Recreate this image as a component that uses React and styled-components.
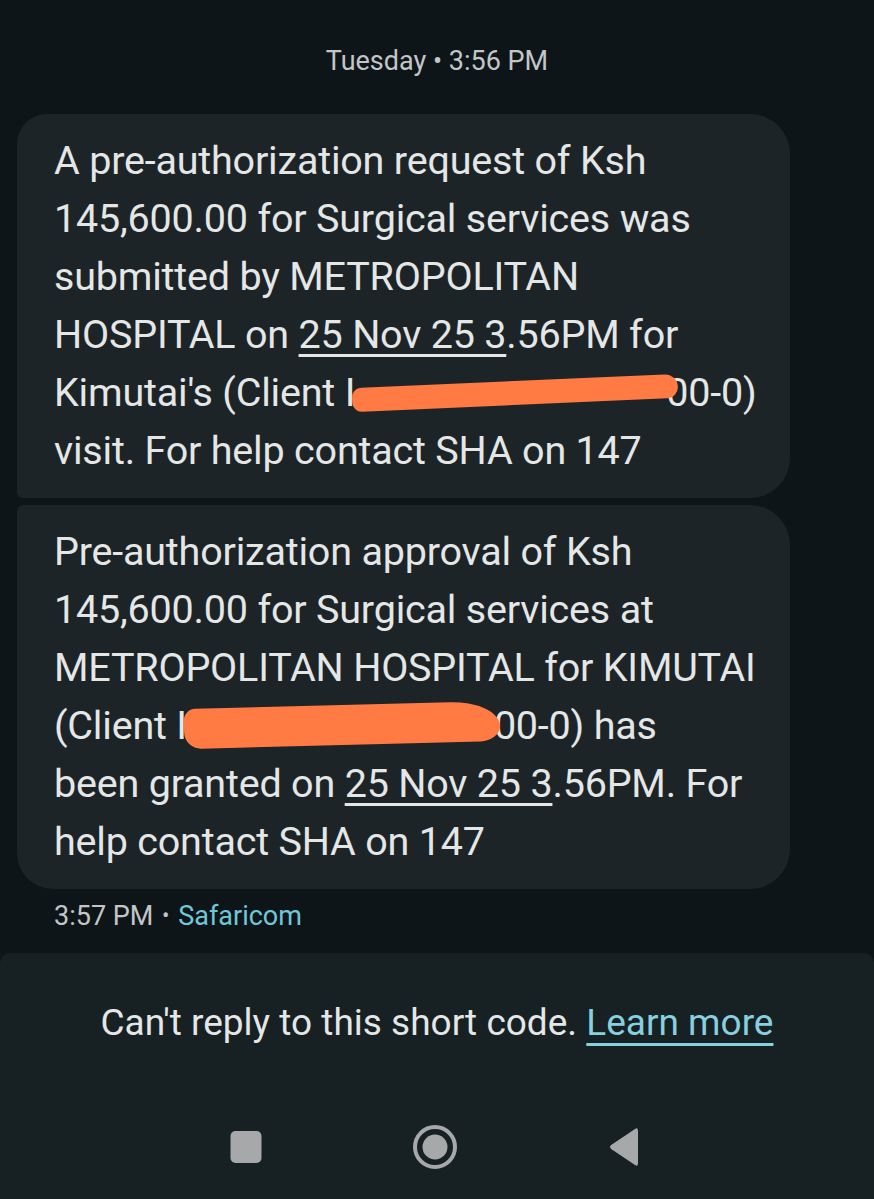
import React from 'react';
import styled, { createGlobalStyle } from 'styled-components';

const GlobalStyle = createGlobalStyle`
  html, body {
    margin: 0;
    padding: 0;
    background: #0e1518;
  }
  body {
    font-family: Roboto, "Liberation Sans", sans-serif;
    -webkit-font-smoothing: antialiased;
  }
`;

const Screen = styled.div`
  width: 874px;
  height: 1199px;
  display: flex;
  flex-direction: column;
  background: #0e1518;
  overflow: hidden;
`;

const Thread = styled.div`
  display: flex;
  flex-direction: column;
  padding: 0 84px 0 17px;
  flex: 1;
`;

const DateHeader = styled.div`
  text-align: center;
  color: #c3c6c7;
  font-size: 27px;
  line-height: 32px;
  padding: 45px 0 37px 67px;
`;

const BubbleGroup = styled.div`
  display: flex;
  flex-direction: column;
  gap: 7px;
`;

const Bubble = styled.div`
  background: #1c2427;
  color: #e5e6e6;
  padding: 18px 37px;
  border-radius: ${({ $corners }) =>
    $corners === 'first' ? '30px 40px 40px 6px' : '6px 40px 40px 36px'};
  font-size: 39.5px;
  line-height: 58px;
  letter-spacing: -0.2px;
`;

const Line = styled.div`
  white-space: nowrap;
`;

const DateLink = styled.span`
  text-decoration: underline;
  text-decoration-thickness: 3px;
  text-underline-offset: 6px;
`;

const Redaction = styled.span`
  display: inline-block;
  width: ${({ $width }) => $width}px;
  height: ${({ $thick }) => $thick}px;
  margin: 0 ${({ $overlap }) => -$overlap}px 0 -3px;
  vertical-align: ${({ $drop }) => -$drop}px;
  background: #ff7b43;
  border-radius: ${({ $shape }) => $shape};
  transform: rotate(${({ $tilt }) => $tilt}deg);
  position: relative;
`;

const Meta = styled.div`
  color: #c3c6c7;
  font-size: 27px;
  line-height: 32px;
  padding: 11px 0 0 37px;
  height: 53px;
`;

const Dot = styled.span`
  font-size: 22px;
  vertical-align: 2px;
  margin: 0 2px;
`;

const Sender = styled.span`
  color: #6fc8d8;
`;

const Footer = styled.div`
  background: #172023;
  border-radius: 10px 10px 0 0;
  height: 247px;
  display: flex;
  flex-direction: column;
  align-items: center;
`;

const Notice = styled.div`
  color: #e5e6e6;
  font-size: 37px;
  line-height: 44px;
  padding-top: 48px;
  text-align: center;
`;

const LearnMore = styled.span`
  color: #86d0df;
  text-decoration: underline;
  text-decoration-thickness: 3px;
  text-underline-offset: 8px;
`;

const NavBar = styled.div`
  display: flex;
  align-items: center;
  justify-content: center;
  gap: 139px;
  margin: 77px 0 0 -4px;
`;

const NavButton = styled.div`
  width: 50px;
  height: 50px;
  display: flex;
  align-items: center;
  justify-content: center;
`;

const messages = [
  {
    id: 1,
    corners: 'first',
    lines: [
      <>A pre-authorization request of Ksh</>,
      <>145,600.00 for Surgical services was</>,
      <>submitted by METROPOLITAN</>,
      <>HOSPITAL on <DateLink>25 Nov 25 3</DateLink>.56PM for</>,
      <>
        Kimutai's (Client I
        <Redaction $width={326} $thick={24} $drop={-1} $tilt={-2.5} $overlap={12} $shape="12px 16px 14px 12px" />
        00-0)
      </>,
      <>visit. For help contact SHA on 147</>,
    ],
  },
  {
    id: 2,
    corners: 'last',
    lines: [
      <>Pre-authorization approval of Ksh</>,
      <>145,600.00 for Surgical services at</>,
      <>METROPOLITAN HOSPITAL for KIMUTAI</>,
      <>
        (Client I
        <Redaction $width={316} $thick={40} $drop={6} $tilt={-1.5} $overlap={6} $shape="14px 60px 24px 20px / 14px 30px 18px 20px" />
        00-0) has
      </>,
      <>been granted on <DateLink>25 Nov 25 3</DateLink>.56PM. For</>,
      <>help contact SHA on 147</>,
    ],
  },
];

const App = () => {
  return (
    <>
      <GlobalStyle />
      <Screen>
        <Thread>
          <DateHeader>Tuesday • 3:56 PM</DateHeader>
          <BubbleGroup>
            {messages.map((m) => (
              <Bubble key={m.id} $corners={m.corners}>
                {m.lines.map((line, i) => (
                  <Line key={i}>{line}</Line>
                ))}
              </Bubble>
            ))}
          </BubbleGroup>
          <Meta>
            3:57 PM <Dot>•</Dot> <Sender>Safaricom</Sender>
          </Meta>
        </Thread>
        <Footer>
          <Notice>
            Can't reply to this short code. <LearnMore>Learn more</LearnMore>
          </Notice>
          <NavBar>
            <NavButton>
              <svg width="32" height="34" viewBox="0 0 32 34">
                <rect x="0.5" y="1" width="31" height="32" rx="5" fill="#a6a8a9" />
              </svg>
            </NavButton>
            <NavButton>
              <svg width="46" height="46" viewBox="0 0 46 46">
                <circle cx="23" cy="23" r="20" fill="none" stroke="#a6a8a9" strokeWidth="4" />
                <circle cx="23" cy="23" r="12.5" fill="#a6a8a9" />
              </svg>
            </NavButton>
            <NavButton>
              <svg width="34" height="40" viewBox="0 0 34 40">
                <path d="M31 4 L31 36 Q31 40 28 38 L4.5 22.2 Q1.5 20 4.5 17.8 L28 2 Q31 0 31 4 Z" fill="#a6a8a9" />
              </svg>
            </NavButton>
          </NavBar>
        </Footer>
      </Screen>
    </>
  );
};

export default App;
